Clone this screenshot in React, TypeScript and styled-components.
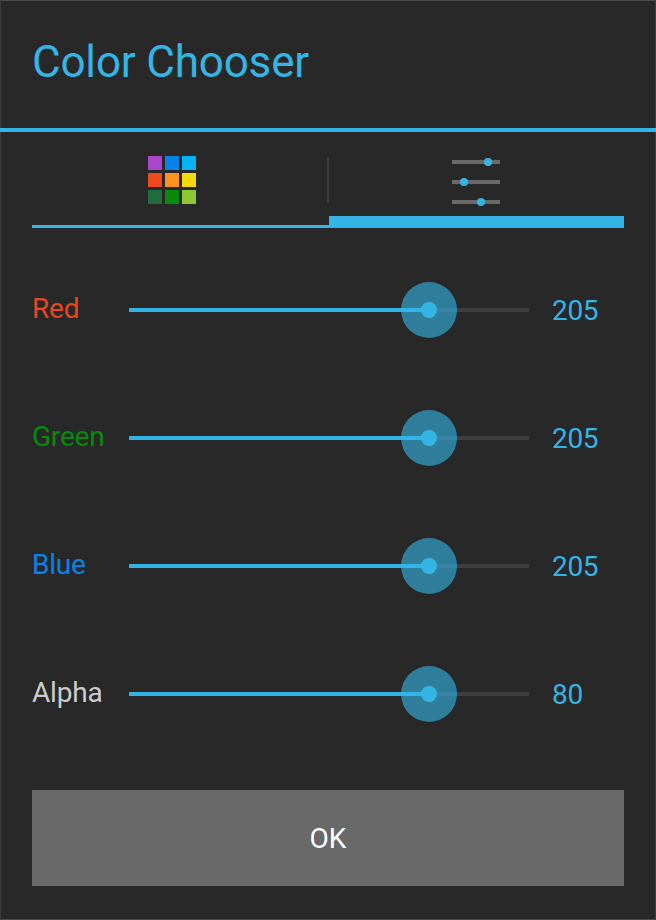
import React from "react";
import styled, { createGlobalStyle } from "styled-components";

const Global = createGlobalStyle`
  * { box-sizing: border-box; }
  body { margin: 0; background: #282828; font-family: Roboto, "Liberation Sans", sans-serif; }
`;
const Dialog = styled.main`
  width: 656px; height: 920px; background: #282828; border: 1px solid #4a4a4a;
  border-left-color: #3a3a3a; border-right-color: #3f3f3f;
`;
const Header = styled.header`
  height: 131px; margin: 0 -1px; padding: 33px 0 0 32px; border-bottom: 4px solid #33b5e5;
`;
const Title = styled.h1`
  margin: 0; font-size: 44px; line-height: 56px; font-weight: 400; color: #33b5e5;
  letter-spacing: -0.18px; white-space: nowrap;
`;
const Tabs = styled.nav`
  display: grid; grid-template-columns: 297px 295px; height: 96px; margin: 0 31px;
`;
const Tab = styled.button<{ $active?: boolean }>`
  display: flex; justify-content: space-between; align-items: flex-start;
  padding: 24px 0 0 ${p => (p.$active ? 123 : 116)}px;
  border: 0; background: none;
  border-bottom: ${p => (p.$active ? 12 : 3)}px solid #33b5e5;
  svg { display: block; }
`;
const Divider = styled.span`
  width: 2px; height: 46px; margin-top: 1px; background: #3c3c3c;
`;
const Controls = styled.section`
  margin: 18px 31px 0; display: flex; flex-direction: column;
`;
const Row = styled.div`
  display: grid; grid-template-columns: 97px 400px 1fr; height: 128px; align-items: start;
`;
const Label = styled.label<{ $color: string }>`
  font-size: 28px; line-height: 36px; margin-top: 45px; color: ${p => p.$color};
  letter-spacing: -0.2px;
`;
const Slider = styled.div`
  display: flex; align-items: center; height: 56px; margin-top: 36px;
`;
const Fill = styled.div`width: 272px; height: 4px; background: #33b5e5;`;
const Rest = styled.div`width: 72px; height: 4px; background: #3e3e3e;`;
const Value = styled.output`
  font-size: 28px; line-height: 36px; margin: 47px 0 0 23px; color: #33b5e5;
  letter-spacing: -0.3px;
`;
const Ok = styled.button`
  display: block; width: 592px; height: 96px; margin: 32px 31px 0; padding: 2px 0 0; border: 0;
  background: #696969; color: #fff; font: 28px/36px Roboto, sans-serif;
`;
const colors = ["#aa46cc", "#0783e8", "#04b3f0", "#ef4a1c", "#fb931e", "#f5d90a", "#226b3c", "#078a0c", "#8fc634"];

const channels = [
  { name: "Red", color: "#e8461c", value: 205 },
  { name: "Green", color: "#078a0c", value: 205 },
  { name: "Blue", color: "#0783e8", value: 205 },
  { name: "Alpha", color: "#cccccc", value: 80 },
];
const Thumb = () => (
  <svg width="56" height="56" viewBox="0 0 56 56">
    <circle cx="28" cy="28" r="28" fill="#2f7e9b" />
    <path d="M28 28H56" stroke="#3a859f" strokeWidth="4" />
    <path d="M0 28H28" stroke="#33b5e5" strokeWidth="4" />
    <circle cx="28" cy="28" r="8" fill="#33b5e5" />
  </svg>
);

export default function App() {
  return (
    <>
      <Global />
      <Dialog>
        <Header><Title>Color Chooser</Title></Header>
        <Tabs>
          <Tab aria-label="Palette">
            <svg width="48" height="48">
              {colors.map((c, i) => <rect key={c} x={(i % 3) * 17} y={Math.floor(i / 3) * 17} width="14" height="14" fill={c} />)}
            </svg>
            <Divider />
          </Tab>
          <Tab $active aria-label="Sliders">
            <svg width="48" height="52">
              <path d="M0 6H48M0 26H48M0 46H48" stroke="#696969" strokeWidth="4" />
              <g fill="#33b5e5"><circle cx="36" cy="6" r="4" /><circle cx="12" cy="26" r="4" /><circle cx="29" cy="46" r="4" /></g>
            </svg>
          </Tab>
        </Tabs>
        <Controls>
          {channels.map(c => (
            <Row key={c.name}>
              <Label $color={c.color}>{c.name}</Label>
              <Slider><Fill /><Thumb /><Rest /></Slider>
              <Value>{c.value}</Value>
            </Row>
          ))}
        </Controls>
        <Ok>OK</Ok>
      </Dialog>
    </>
  );
}
